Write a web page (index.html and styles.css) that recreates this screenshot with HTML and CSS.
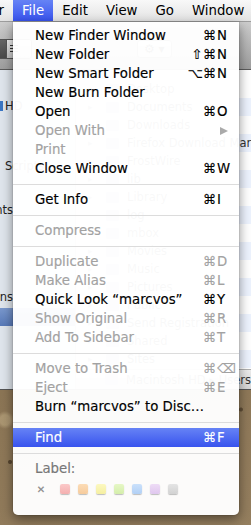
FILE: index.html
```html
<!DOCTYPE html>
<html lang="en">
<head>
    <meta charset="UTF-8">
    <meta name="viewport" content="width=device-width, initial-scale=1.0">
    <title>Finder – File menu</title>
    <link rel="stylesheet" href="styles.css">
</head>
<body>
    <div class="menubar">
        <span class="mb-item mb-app">Finder</span>
        <span class="mb-item mb-open">File</span>
        <span class="mb-item">Edit</span>
        <span class="mb-item">View</span>
        <span class="mb-item">Go</span>
        <span class="mb-item">Window</span>
    </div>

    <!-- Finder window behind the menu -->
    <div class="finder">
        <div class="toolbar">
            <div class="view-seg">
                <span class="seg seg-on"></span>
                <span class="seg seg-list"><i></i><i></i><i></i></span>
            </div>
            <span class="gear-btn">⚙ ▾</span>
        </div>
        <div class="finder-body">
            <div class="sidebar">
                <div class="side-row row-hd"><span class="disk"></span>HD</div>
                <div class="side-row row-sc">Scripts</div>
                <div class="side-row row-s"><span class="cut">Documents</span></div>
                <div class="side-row row-ns"><span class="cut">Applications</span></div>
                <div class="side-row side-sel"></div>
            </div>
            <div class="main">
                <div class="file-list">
                    <div class="file-row"><span class="tri">▸</span><span class="ico"></span>Desktop</div>
                    <div class="file-row"><span class="tri">▸</span><span class="ico"></span>Documents</div>
                    <div class="file-row"><span class="tri">▸</span><span class="ico"></span>Downloads</div>
                    <div class="file-row"><span class="tri">▸</span><span class="ico"></span>Firefox Download Manager</div>
                    <div class="file-row"><span class="tri">▸</span><span class="ico"></span>FrostWire</div>
                    <div class="file-row"><span class="tri">▸</span><span class="ico"></span>lib</div>
                    <div class="file-row"><span class="tri">▸</span><span class="ico"></span>Library</div>
                    <div class="file-row"><span class="tri"></span><span class="ico"></span>log</div>
                    <div class="file-row"><span class="tri"></span><span class="ico"></span>mbox</div>
                    <div class="file-row"><span class="tri">▸</span><span class="ico"></span>Movies</div>
                    <div class="file-row"><span class="tri">▸</span><span class="ico"></span>Music</div>
                    <div class="file-row"><span class="tri">▸</span><span class="ico"></span>Pictures</div>
                    <div class="file-row"><span class="tri">▸</span><span class="ico"></span>Public</div>
                    <div class="file-row"><span class="tri">▸</span><span class="ico"></span>Send Registration</div>
                    <div class="file-row"><span class="tri">▸</span><span class="ico"></span>Shared</div>
                    <div class="file-row"><span class="tri">▸</span><span class="ico"></span>Sites</div>
                </div>
                <div class="pathbar"><span class="ico"></span>Macintosh HD ▸ Users</div>
            </div>
        </div>
    </div>

    <!-- the open File menu -->
    <div class="menu">
        <div class="item"><span>New Finder Window</span><span class="mods">⌘</span><span class="key">N</span></div>
        <div class="item"><span>New Folder</span><span class="mods">⇧⌘</span><span class="key">N</span></div>
        <div class="item"><span>New Smart Folder</span><span class="mods">⌥⌘</span><span class="key">N</span></div>
        <div class="item"><span>New Burn Folder</span><span class="mods"></span><span class="key"></span></div>
        <div class="item"><span>Open</span><span class="mods">⌘</span><span class="key">O</span></div>
        <div class="item off"><span>Open With</span><span class="mods"></span><span class="key"><span class="submenu"></span></span></div>
        <div class="item off"><span>Print</span><span class="mods"></span><span class="key"></span></div>
        <div class="item"><span>Close Window</span><span class="mods">⌘</span><span class="key">W</span></div>
        <div class="sep"></div>
        <div class="item"><span>Get Info</span><span class="mods">⌘</span><span class="key">I</span></div>
        <div class="sep"></div>
        <div class="item off"><span>Compress</span><span class="mods"></span><span class="key"></span></div>
        <div class="sep"></div>
        <div class="item off"><span>Duplicate</span><span class="mods">⌘</span><span class="key">D</span></div>
        <div class="item off"><span>Make Alias</span><span class="mods">⌘</span><span class="key">L</span></div>
        <div class="item"><span>Quick Look “marcvos”</span><span class="mods">⌘</span><span class="key">Y</span></div>
        <div class="item off"><span>Show Original</span><span class="mods">⌘</span><span class="key">R</span></div>
        <div class="item off"><span>Add To Sidebar</span><span class="mods">⌘</span><span class="key">T</span></div>
        <div class="sep"></div>
        <div class="item off"><span>Move to Trash</span><span class="mods">⌘</span><span class="key">⌫</span></div>
        <div class="item off"><span>Eject</span><span class="mods">⌘</span><span class="key">E</span></div>
        <div class="item"><span>Burn “marcvos” to Disc…</span><span class="mods"></span><span class="key"></span></div>
        <div class="sep"></div>
        <div class="item sel"><span>Find</span><span class="mods">⌘</span><span class="key">F</span></div>
        <div class="sep"></div>
        <div class="label-title">Label:</div>
        <div class="swatches">
            <span class="swatch-none">✕</span>
            <span class="swatch red"></span>
            <span class="swatch orange"></span>
            <span class="swatch yellow"></span>
            <span class="swatch green"></span>
            <span class="swatch blue"></span>
            <span class="swatch purple"></span>
            <span class="swatch gray"></span>
        </div>
    </div>
</body>
</html>
```

FILE: styles.css
```css
:root {
    --select-top: #6683f5;
    --select-bottom: #3853ee;
    --disabled: #a2a2a2;
}
* {
    margin: 0;
    padding: 0;
    box-sizing: border-box;
}
html, body {
    width: 251px;
    height: 525px;
    overflow: hidden;
}
body {
    position: relative;
    font-family: "DejaVu Sans", "Liberation Sans", sans-serif;
    font-size: 13.3px;
    color: #000;
    /* desktop wallpaper */
    background:
        radial-gradient(circle at 4% 88%, rgba(50, 35, 20, 0.6) 0 1.5px, transparent 2.5px),
        radial-gradient(circle at 96% 78%, rgba(50, 35, 20, 0.5) 0 1.5px, transparent 2.5px),
        radial-gradient(circle at 2% 80%, rgba(200, 180, 140, 0.5) 0 5px, transparent 9px),
        linear-gradient(160deg, #9a8463, #8a7454 60%, #957f5f);
}

/* menu bar */
.menubar {
    display: flex;
    height: 22px;
    white-space: nowrap;
    background: linear-gradient(#f8f8f8, #e3e3e3);
    border-bottom: 1px solid #9d9d9d;
}
.mb-item {
    padding: 0 9px;
    line-height: 21px;
}
.mb-app {
    margin-left: -46px;
}
.mb-open {
    color: #fff;
    background: linear-gradient(var(--select-top), var(--select-bottom));
}

/* finder window */
.finder {
    height: 368px;
    display: flex;
    flex-direction: column;
    background: #fff;
    border-bottom: 1px solid #555;
}
.toolbar {
    height: 48px;
    display: flex;
    align-items: center;
    gap: 105px;
    background: linear-gradient(#cdcdcd, #9e9e9e);
    border-bottom: 1px solid #5c5c5c;
}
.view-seg {
    display: flex;
    margin-left: -20px;
    height: 20px;
    margin-top: 6px;
    border: 1px solid #555;
    border-radius: 3px;
    overflow: hidden;
}
.seg {
    width: 25px;
}
.seg-on {
    background: linear-gradient(#666, #4a4a4a);
}
.seg-list {
    display: flex;
    flex-direction: column;
    justify-content: center;
    gap: 2px;
    padding-left: 3px;
    background: linear-gradient(#f2f2f2, #c4c4c4);
    border-left: 1px solid #555;
}
.seg-list i {
    display: block;
    width: 8px;
    height: 1px;
    background: #333;
}
.gear-btn {
    margin-top: 6px;
    padding: 1px 6px;
    border: 1px solid #6a6a6a;
    border-radius: 3px;
    font-size: 12px;
    background: linear-gradient(#f0f0f0, #c8c8c8);
}
.finder-body {
    flex: 1;
    display: flex;
}
.sidebar {
    width: 76px;
    flex-shrink: 0;
    padding-top: 27px;
    background: #dfe5ec;
    border-right: 1px solid #b4b4b4;
    font-size: 11.5px;
    color: #222;
}
.side-row {
    height: 18px;
    line-height: 18px;
    display: flex;
    white-space: nowrap;
}
.disk {
    width: 3px;
    height: 10px;
    margin: 4px 2px 0 0;
    background: #3a76c4;
}
.row-sc {
    margin-top: 42px;
    padding-left: 5px;
}
.row-s {
    margin-top: 26px;
}
.row-ns {
    margin-top: 69px;
}
.cut {
    width: 13px;
    flex-shrink: 0;
    display: flex;
    justify-content: flex-end;
}
.side-sel {
    margin-top: 2px;
    background: linear-gradient(#7a98cd, #5779b8);
}
.main {
    flex: 1;
    display: flex;
    flex-direction: column;
    min-width: 0;
}
.file-list {
    flex: 1;
    padding-top: 10px;
    font-size: 11.5px;
    color: #333;
}
.file-row {
    height: 18px;
    display: flex;
    align-items: center;
    white-space: nowrap;
}
.file-row:nth-child(even) {
    background: #edf3fe;
}
.tri {
    flex-shrink: 0;
    width: 30px;
    padding-left: 12px;
    font-size: 9px;
    color: #888;
}
.ico {
    flex-shrink: 0;
    width: 13px;
    height: 11px;
    margin-right: 8px;
    background: #b3c7e0;
    border-radius: 1px;
}
.pathbar {
    height: 20px;
    display: flex;
    align-items: center;
    justify-content: flex-end;
    white-space: nowrap;
    font-size: 11.5px;
    color: #333;
    background: linear-gradient(#ececec, #d7d7d7);
    border-top: 1px solid #b0b0b0;
}

/* the menu */
.menu {
    position: absolute;
    left: 13px;
    top: 22px;
    width: 226px;
    padding: 4px 0 15px;
    background: rgba(255, 255, 255, 0.97);
    border-radius: 0 0 5px 5px;
    box-shadow: 0 4px 12px rgba(0, 0, 0, 0.45), 0 0 0 1px rgba(0, 0, 0, 0.07);
    -webkit-text-stroke: 0.15px currentColor;
}
.item {
    display: grid;
    grid-template-columns: 1fr auto 22px;
    height: 19px;
    line-height: 19px;
    padding-left: 22px;
    white-space: nowrap;
}
.item.off {
    color: var(--disabled);
}
.item.sel {
    color: #fff;
    background: linear-gradient(var(--select-top), var(--select-bottom));
}
.mods {
    text-align: right;
    padding-right: 1px;
}
.submenu {
    display: inline-block;
    margin-left: 3px;
    border-left: 8px solid #aaa;
    border-top: 4.5px solid transparent;
    border-bottom: 4.5px solid transparent;
}
.sep {
    height: 12px;
    display: flex;
    align-items: center;
}
.sep::after {
    content: "";
    flex: 1;
    height: 1px;
    background: #dcdcdc;
}
.label-title {
    height: 19px;
    line-height: 19px;
    padding-left: 22px;
    color: #777;
}
.swatches {
    display: flex;
    align-items: center;
    height: 22px;
    padding-left: 22px;
}
.swatch-none {
    width: 12px;
    margin-right: 13px;
    text-align: center;
    font-size: 10px;
    font-weight: bold;
    color: #8a8a8a;
}
.swatch {
    width: 10px;
    height: 10px;
    margin-right: 8px;
    border-radius: 2px;
    box-shadow: 0 1px 1px rgba(0, 0, 0, 0.25);
}
.red { background: linear-gradient(#fbc9c9, #f4b0b0); }
.orange { background: linear-gradient(#fcdcb6, #f6cb9c); }
.yellow { background: linear-gradient(#fcf8c0, #f5efa0); }
.green { background: linear-gradient(#e6f7c6, #d4eeaa); }
.blue { background: linear-gradient(#cbe1fb, #b2d0f5); }
.purple { background: linear-gradient(#eedcf6, #dfc7ee); }
.gray { background: linear-gradient(#e4e4e4, #d2d2d2); }
```
